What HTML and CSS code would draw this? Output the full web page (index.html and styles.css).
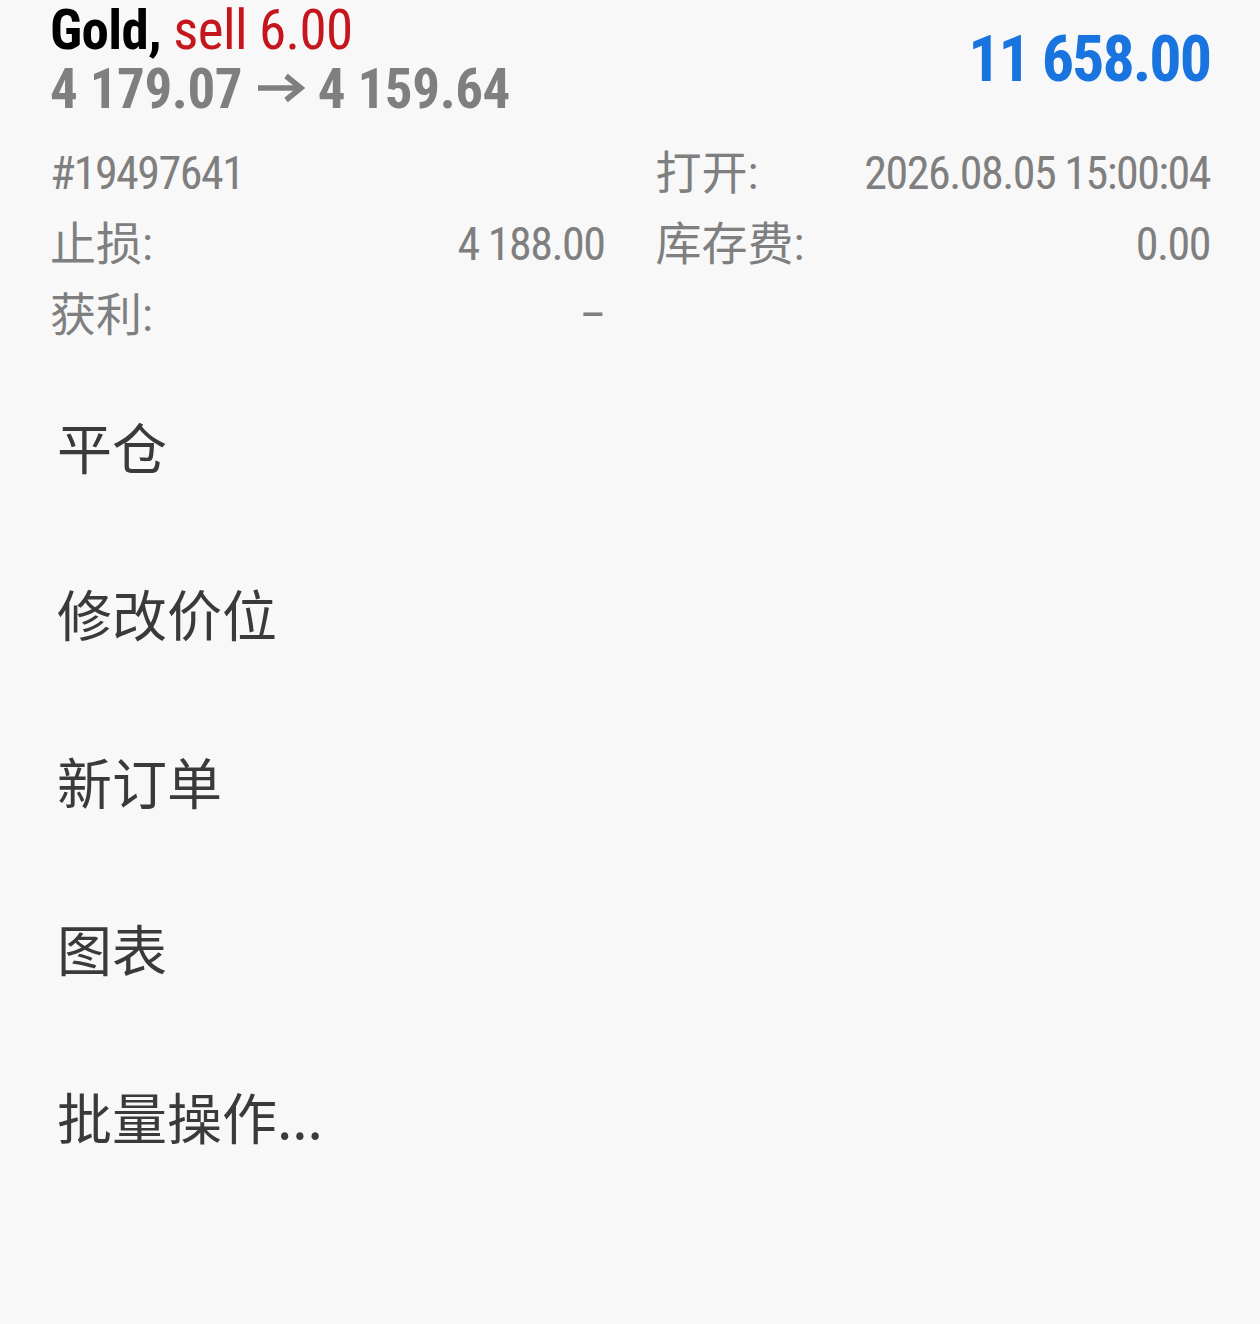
FILE: index.html
```html
<!DOCTYPE html>
<html lang="zh-CN">
<head>
<meta charset="utf-8">
<link rel="stylesheet" href="styles.css">
</head>
<body>
<div class="page">
  <header class="header">
    <div class="title">
      <div class="line1"><span class="sym">Gold,</span> <span class="dir">sell 6.00</span></div>
      <div class="line2">4 179.07 <svg class="arrow" width="48" height="30" viewBox="0 0 48 30" aria-label="→"><path d="M1 15 H43 M29 3 L44 15 L29 27" fill="none" stroke="#7f7f7f" stroke-width="5.5" stroke-linejoin="miter"/></svg> 4 159.64</div>
    </div>
    <div class="profit">11 658.00</div>
  </header>
  <section class="details">
    <div class="cell"><span class="lbl num">#19497641</span><span class="val"></span></div>
    <div class="cell"><span class="lbl">打开:</span><span class="val">2026.08.05 15:00:04</span></div>
    <div class="cell"><span class="lbl">止损:</span><span class="val">4 188.00</span></div>
    <div class="cell"><span class="lbl">库存费:</span><span class="val">0.00</span></div>
    <div class="cell"><span class="lbl">获利:</span><span class="val">–</span></div>
    <div class="cell"></div>
  </section>
  <nav class="menu">
    <div class="item">平仓</div>
    <div class="item">修改价位</div>
    <div class="item">新订单</div>
    <div class="item">图表</div>
    <div class="item">批量操作...</div>
  </nav>
</div>
</body>
</html>
```

FILE: styles.css
```css
html, body {
  margin: 0;
  padding: 0;
  background: #f8f8f8;
}
body {
  font-family: "Roboto Condensed", "Liberation Sans Narrow", "DejaVu Sans Condensed", Roboto, "Noto Sans CJK SC", sans-serif;
  font-stretch: condensed;
}
.page {
  width: 1260px;
}
.header {
  display: flex;
  justify-content: space-between;
  align-items: center;
  padding: 1px 50px 0;
}
.title {
  font-weight: 700;
  font-size: 55px;
  line-height: 59px;
}
.line1 { letter-spacing: -0.6px; }
.sym { color: #000; }
.dir { color: #c4161c; font-weight: 400; }
.line2 { color: #7f7f7f; letter-spacing: -0.4px; }
.arrow {
  vertical-align: 5px;
  margin: 0 1px 0 2px;
}
.profit {
  color: #1a74e0;
  font-weight: 700;
  font-size: 64px;
  line-height: 80px;
  letter-spacing: -2px;
}
.details {
  display: grid;
  grid-template-columns: 1fr 1fr;
  column-gap: 51px;
  padding: 0 50px;
  margin-top: 19px;
  font-size: 46px;
  line-height: 71px;
  color: #7f7f7f;
}
.cell {
  display: flex;
  justify-content: space-between;
  height: 71px;
}
.num, .val { letter-spacing: -1.5px; }
.menu {
  margin-top: 10px;
  padding-left: 57px;
}
.item {
  height: 167.5px;
  display: flex;
  align-items: center;
  font-family: "Noto Sans CJK SC", sans-serif;
  font-size: 55px;
  color: #3a3a3a;
}
```
